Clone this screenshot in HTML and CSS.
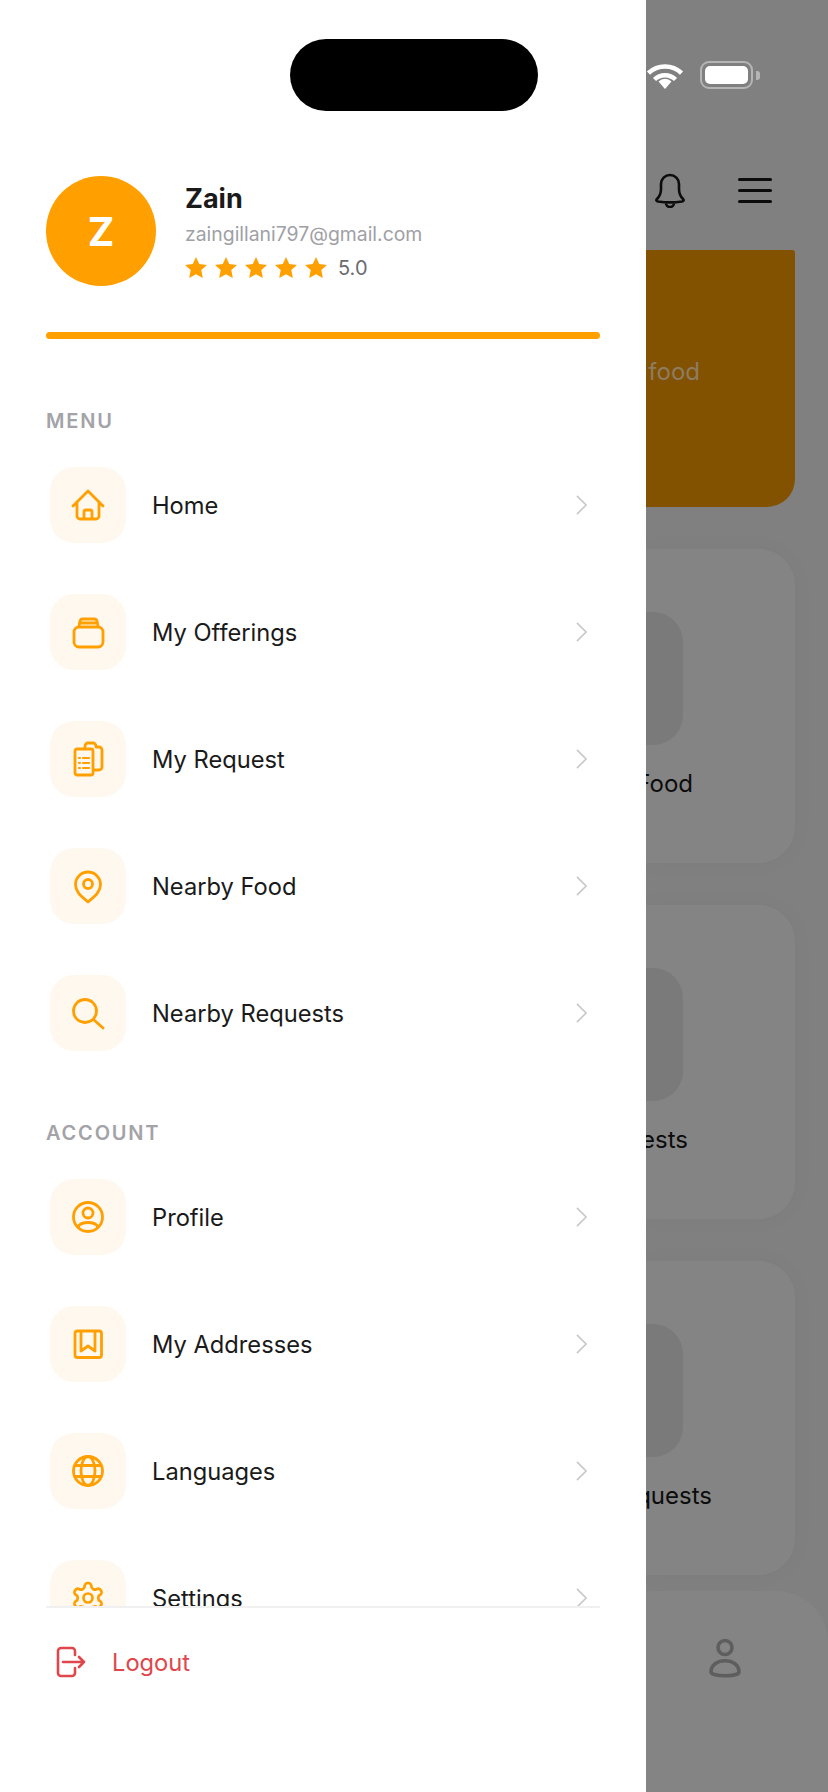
FILE: index.html
```html
<!DOCTYPE html>
<html lang="en">
<head>
  <meta charset="UTF-8" />
  <title>Side menu</title>
  <link rel="stylesheet" href="styles.css">
</head>
<body>
  <div class="screen">
    <aside class="drawer">
      <div class="island"></div>
      <div class="profile">
        <div class="avatar">Z</div>
        <div class="profile-info">
          <div class="name">Zain</div>
          <div class="email">zaingillani797@gmail.com</div>
          <div class="rating">
            <svg class="stars" viewBox="0 0 142 22">
              <path id="star" d="M11 0l3.2 7 7.8.9-5.7 5.2 1.5 7.900L11 17.200 4.200 21l1.500-7.900L0 7.900 7.800 7z" />
              <use href="#star" x="30" />
              <use href="#star" x="60" />
              <use href="#star" x="90" />
              <use href="#star" x="120" />
            </svg>
            <span>5.0</span>
          </div>
        </div>
      </div>
      <div class="bar"></div>

      <nav class="menu">
        <h3 class="menu-title">MENU</h3>
        <ul class="menu-list">
          <li class="menu-row">
            <span class="tile">
              <svg viewBox="0 0 36 36"><path d="M3 19L18 4l15 15M7 16v13a3 3 0 0 0 3 3h16a3 3 0 0 0 3-3V16M14 32v-7a2 2 0 0 1 2-2h4a2 2 0 0 1 2 2v7" /></svg>
            </span>
            <span class="label">Home</span>
            <svg class="chev" viewBox="0 0 12 22"><path d="M1 1l10 10L1 21" /></svg>
          </li>
          <li class="menu-row">
            <span class="tile">
              <svg viewBox="0 0 36 36"><rect x="4" y="13" width="29" height="20" rx="5" /><path d="M9 12l1-5a3 3 0 0 1 3-2h11a3 3 0 0 1 3 2l1 5M10 9h17" /></svg>
            </span>
            <span class="label">My Offerings</span>
            <svg class="chev" viewBox="0 0 12 22"><path d="M1 1l10 10L1 21" /></svg>
          </li>
          <li class="menu-row">
            <span class="tile">
              <svg viewBox="0 0 36 36"><rect x="5" y="8" width="18" height="26" rx="2" /><path d="M15 7V5a3 3 0 0 1 3-3h5a3 3 0 0 1 3 3v1h3a3 3 0 0 1 3 3v17a3 3 0 0 1-3 3h-5" /><path class="thin" d="M9 17h1M13 17h6M9 22h1M13 22h6M9 27h1M13 27h6" /></svg>
            </span>
            <span class="label">My Request</span>
            <svg class="chev" viewBox="0 0 12 22"><path d="M1 1l10 10L1 21" /></svg>
          </li>
          <li class="menu-row">
            <span class="tile">
              <svg viewBox="0 0 36 36"><path d="M18 34C12.5 29 5.5 24.5 5.5 16.5a12.5 12.5 0 0 1 25 0c0 8-7 12.5-12.5 17.5z" /><circle cx="18" cy="16" r="4.5" /></svg>
            </span>
            <span class="label">Nearby Food</span>
            <svg class="chev" viewBox="0 0 12 22"><path d="M1 1l10 10L1 21" /></svg>
          </li>
          <li class="menu-row">
            <span class="tile">
              <svg viewBox="0 0 36 36"><circle cx="15" cy="16" r="11.5" /><path d="M24 25l9 8" /></svg>
            </span>
            <span class="label">Nearby Requests</span>
            <svg class="chev" viewBox="0 0 12 22"><path d="M1 1l10 10L1 21" /></svg>
          </li>
        </ul>

        <h3 class="menu-title">ACCOUNT</h3>
        <ul class="menu-list">
          <li class="menu-row">
            <span class="tile">
              <svg viewBox="0 0 36 36"><circle cx="18" cy="18" r="14.5" /><circle cx="18" cy="14" r="5" /><path d="M8 28c3-6 17-6 20 0" /></svg>
            </span>
            <span class="label">Profile</span>
            <svg class="chev" viewBox="0 0 12 22"><path d="M1 1l10 10L1 21" /></svg>
          </li>
          <li class="menu-row">
            <span class="tile">
              <svg viewBox="0 0 36 36"><rect x="5" y="5" width="26.5" height="26.5" rx="2.5" /><path d="M11 6v19l7-5 7 5V6" /></svg>
            </span>
            <span class="label">My Addresses</span>
            <svg class="chev" viewBox="0 0 12 22"><path d="M1 1l10 10L1 21" /></svg>
          </li>
          <li class="menu-row">
            <span class="tile">
              <svg viewBox="0 0 36 36"><circle cx="18" cy="18" r="14.5" /><ellipse cx="18" cy="18" rx="7" ry="14.5" /><path d="M5.5 12.5h25M5.5 23.5h25" /></svg>
            </span>
            <span class="label">Languages</span>
            <svg class="chev" viewBox="0 0 12 22"><path d="M1 1l10 10L1 21" /></svg>
          </li>
          <li class="menu-row">
            <span class="tile">
              <svg class="gear" viewBox="0 0 24 24"><path d="M12.22 2h-.44a2 2 0 0 0-2 2v.18a2 2 0 0 1-1 1.73l-.43.25a2 2 0 0 1-2 0l-.15-.08a2 2 0 0 0-2.73.73l-.22.38a2 2 0 0 0 .73 2.73l.15.1a2 2 0 0 1 1 1.72v.51a2 2 0 0 1-1 1.74l-.15.09a2 2 0 0 0-.73 2.73l.22.38a2 2 0 0 0 2.73.73l.15-.08a2 2 0 0 1 2 0l.43.25a2 2 0 0 1 1 1.73V20a2 2 0 0 0 2 2h.44a2 2 0 0 0 2-2v-.18a2 2 0 0 1 1-1.73l.43-.25a2 2 0 0 1 2 0l.15.08a2 2 0 0 0 2.73-.73l.22-.39a2 2 0 0 0-.73-2.73l-.15-.08a2 2 0 0 1-1-1.74v-.5a2 2 0 0 1 1-1.74l.15-.09a2 2 0 0 0 .73-2.73l-.22-.38a2 2 0 0 0-2.73-.73l-.15.08a2 2 0 0 1-2 0l-.43-.25a2 2 0 0 1-1-1.73V4a2 2 0 0 0-2-2z" /><circle cx="12" cy="12" r="3" /></svg>
            </span>
            <span class="label">Settings</span>
            <svg class="chev" viewBox="0 0 12 22"><path d="M1 1l10 10L1 21" /></svg>
          </li>
        </ul>
      </nav>

      <div class="logout">
        <svg viewBox="0 0 30 32"><path d="M19 9V5a3 3 0 0 0-3-3H5a3 3 0 0 0-3 3v22a3 3 0 0 0 3 3h11a3 3 0 0 0 3-3v-5M7 16h21M23 11l5 5-5 5" /></svg>
        <span>Logout</span>
      </div>
    </aside>

    <!-- home screen dimmed behind the open drawer -->
    <main class="home">
      <div class="status">
        <svg class="wifi" viewBox="0 0 36 27">
          <path d="M1.5 11a24 24 0 0 1 33 0M7.5 17.5a15 15 0 0 1 21 0" />
          <path class="wedge" d="M18 27l-6.5-7.5a9 9 0 0 1 13 0z" />
        </svg>
        <div class="battery"><div class="battery-fill"></div></div>
        <div class="battery-nub"></div>
      </div>
      <div class="topbar">
        <svg class="bell" viewBox="0 0 34 36"><path d="M4 27c3-3 4-5 4-10V12a9 9 0 0 1 18 0v5c0 5 1 7 4 10 1 1 1 2-1 2.5-7 1-17 1-24 0-2-.5-2-1.500-1-2.500zM13 31a4 4 0 0 0 8 0" /></svg>
        <div class="burger"><span></span><span></span><span></span></div>
      </div>
      <div class="banner"><span>food</span></div>
      <div class="card">
        <div class="card-tile"></div>
        <div class="card-text">Nearby Food</div>
      </div>
      <div class="card">
        <div class="card-tile"></div>
        <div class="card-text card-text-short">Nearby Requests</div>
      </div>
      <div class="card">
        <div class="card-tile"></div>
        <div class="card-text card-text-long">Incoming Requests</div>
      </div>
      <div class="tabbar">
        <svg viewBox="0 0 36 42"><circle cx="18" cy="10.5" r="7" /><path d="M4 35C4 20 32 20 32 35 32 40 4 40 4 35z" /></svg>
      </div>
    </main>
  </div>
</body>
</html>
```

FILE: styles.css
```css
* {
  box-sizing: border-box;
}
body {
  margin: 0;
  font-family: 'Inter', 'Liberation Sans', sans-serif;
  background: #808080;
}
.screen {
  display: flex;
  width: 828px;
  height: 1792px;
  overflow: hidden;
}

/* Drawer */
.drawer {
  position: relative;
  display: flex;
  flex-direction: column;
  flex: 0 0 646px;
  height: 1792px;
  padding-top: 176px;
  background: #fff;
}
.island {
  position: absolute;
  top: 39px;
  left: 290px;
  width: 248px;
  height: 72px;
  border-radius: 36px;
  background: #000;
}
.profile {
  display: flex;
  gap: 29px;
  margin: 0 46px;
}
.avatar {
  display: flex;
  align-items: center;
  justify-content: center;
  flex: 0 0 110px;
  height: 110px;
  border-radius: 50%;
  background: #ff9f00;
  color: #fff;
  font-size: 40px;
  font-weight: 700;
}
.profile-info {
  padding-top: 6px;
}
.name {
  font-size: 27px;
  font-weight: 700;
  line-height: 34px;
  color: #1a1a1a;
}
.email {
  margin-top: 5px;
  font-size: 19.4px;
  line-height: 26px;
  color: #a0a0a6;
}
.rating {
  display: flex;
  align-items: center;
  gap: 11px;
  margin-top: 9px;
  font-size: 20px;
  color: #6b6b70;
}
.stars {
  width: 142px;
  height: 22px;
  fill: #ff9f00;
}
.bar {
  flex: none;
  height: 7px;
  margin: 46px 46px 0;
  border-radius: 4px;
  background: #ff9f00;
}

.menu {
  flex: 1;
  min-height: 0;
  overflow: hidden;
  padding: 0 46px;
}
.menu-title {
  margin: 70px 0 34px;
  font-size: 20px;
  font-weight: 600;
  line-height: 24px;
  letter-spacing: 1.8px;
  color: #a3a3a8;
}
.menu-list {
  display: flex;
  flex-direction: column;
  gap: 51px;
  margin: 0;
  padding: 0 13px 0 4px;
  list-style: none;
}
.menu-row {
  display: flex;
  align-items: center;
  gap: 26px;
  height: 76px;
}
.tile {
  display: flex;
  align-items: center;
  justify-content: center;
  flex: 0 0 76px;
  height: 76px;
  border-radius: 24px;
  background: #fff8ef;
}
.tile svg {
  width: 36px;
  height: 36px;
  fill: none;
  stroke: #ff9f00;
  stroke-width: 2.8;
  stroke-linecap: round;
  stroke-linejoin: round;
}
.tile .gear {
  stroke-width: 1.8;
}
.tile .thin {
  stroke-width: 2.2;
}
.label {
  flex: 1;
  font-size: 23.7px;
  color: #1a1a1a;
}
.chev {
  width: 11px;
  height: 20px;
  fill: none;
  stroke: #c9c9c9;
  stroke-width: 1.8;
}

.logout {
  display: flex;
  align-items: center;
  gap: 26px;
  flex: 0 0 186px;
  margin: 0 46px;
  padding: 0 0 76px 10px;
  border-top: 2px solid #f0f0f0;
  font-size: 23.7px;
  color: #e0474c;
}
.logout svg {
  width: 30px;
  height: 32px;
  fill: none;
  stroke: #e0474c;
  stroke-width: 2.6;
  stroke-linecap: round;
  stroke-linejoin: round;
}

/* Dimmed home screen */
.home {
  flex: 1;
  min-width: 0;
  overflow: hidden;
  background: #808080;
}
.status {
  display: flex;
  align-items: center;
  height: 28px;
  margin-top: 61px;
  padding-left: 1px;
}
.wifi {
  width: 36px;
  height: 27px;
  fill: none;
  stroke: #fff;
  stroke-width: 4.5;
}
.wifi .wedge {
  fill: #fff;
  stroke: none;
}
.battery {
  width: 53px;
  height: 28px;
  margin-left: 17px;
  padding: 3px;
  border: 2px solid #b5b5b5;
  border-radius: 9px;
}
.battery-fill {
  height: 100%;
  border-radius: 5px;
  background: #fff;
}
.battery-nub {
  width: 4px;
  height: 9px;
  margin-left: 3px;
  border-radius: 0 3px 3px 0;
  background: #b5b5b5;
}
.topbar {
  display: flex;
  align-items: center;
  justify-content: flex-end;
  gap: 51px;
  height: 36px;
  margin-top: 83px;
  padding-right: 56px;
}
.bell {
  width: 34px;
  height: 36px;
  fill: none;
  stroke: #0c0c0c;
  stroke-width: 2.6;
}
.burger {
  display: flex;
  flex-direction: column;
  gap: 8px;
  width: 34px;
}
.burger span {
  height: 3px;
  border-radius: 2px;
  background: #0c0c0c;
}
.banner {
  display: flex;
  align-items: center;
  justify-content: flex-end;
  height: 257px;
  margin: 42px 33px 0 0;
  padding: 0 95px 14px 0;
  border-radius: 0 3px 28px 0;
  background: #835200;
  font-size: 24px;
  white-space: nowrap;
  color: #8d7c62;
}
.card {
  height: 314px;
  margin: 42px 33px 0 0;
  padding-top: 63px;
  border-radius: 0 36px 36px 0;
  background: #848484;
  box-shadow: 0 0 24px rgba(0,0,0,0.03);
}
.card-tile {
  height: 133px;
  margin-right: 112px;
  border-radius: 0 30px 30px 0;
  background: #7a7a7a;
}
.card-text {
  display: flex;
  justify-content: flex-end;
  margin-top: 24px;
  padding-right: 102px;
  font-size: 24px;
  line-height: 30px;
  white-space: nowrap;
  color: #0c0c0c;
}
.card-text-short {
  padding-right: 107px;
}
.card-text-long {
  padding-right: 83px;
}
.tabbar {
  display: flex;
  justify-content: flex-end;
  height: 202px;
  margin-top: 16px;
  padding: 46px 85px 0 0;
  border-radius: 0 52px 0 0;
  background: #848484;
}
.tabbar svg {
  width: 36px;
  height: 42px;
  fill: none;
  stroke: #5e5e5e;
  stroke-width: 3.6;
}
```
